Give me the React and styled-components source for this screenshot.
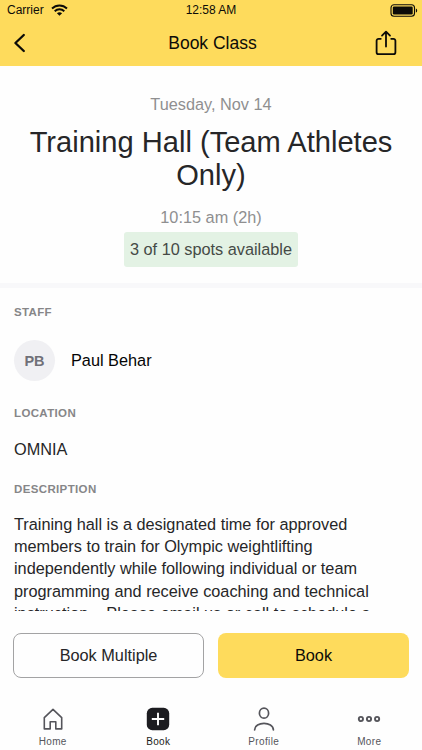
import styled, { createGlobalStyle } from 'styled-components'

const GlobalStyle = createGlobalStyle`
  * {
    box-sizing: border-box;
  }
  body {
    margin: 0;
    background: #fefefe;
    font-family: 'Liberation Sans', Arial, sans-serif;
    font-size: 16.3px;
    color: #262628;
  }
`

const Screen = styled.div`
  display: flex;
  flex-direction: column;
  width: 100%;
  height: 750px;
  overflow: hidden;
`

const TopBar = styled.header`
  flex: none;
  height: 66px;
  background: #fedb5c;
  color: #0c0b08;
`

const StatusBar = styled.div`
  display: grid;
  grid-template-columns: 1fr auto 1fr;
  align-items: center;
  height: 20px;
  padding: 0 4px 0 7px;
  font-size: 12px;
  line-height: 20px;
  & > svg {
    justify-self: end;
  }
`

const Carrier = styled.div`
  display: flex;
  align-items: center;
  gap: 7px;
`

const Clock = styled.div`
  padding-right: 3px;
`

const NavBar = styled.div`
  display: grid;
  grid-template-columns: 60px 1fr 60px;
  align-items: center;
  height: 46px;
`

const IconButton = styled.button`
  display: flex;
  justify-content: ${(props) => (props.$end ? 'flex-end' : 'flex-start')};
  padding: ${(props) => (props.$end ? '0 25.5px 0 0' : '0 0 0 12px')};
  border: 0;
  background: none;
  color: inherit;
`

const NavTitle = styled.h1`
  margin: 0;
  font-size: 17.5px;
  font-weight: 400;
  line-height: 20px;
  text-align: center;
  padding-left: 3px;
`

const Summary = styled.section`
  flex: none;
  display: flex;
  flex-direction: column;
  align-items: center;
  height: 222px;
  padding: 28px 20px 0;
  border-bottom: 5px solid #f8f8fa;
  text-align: center;
`

const Muted = styled.div`
  line-height: 20px;
  color: #8f8f90;
`

const ClassName = styled.h2`
  margin: 12px 0 16px;
  font-size: 29.1px;
  font-weight: 400;
  line-height: 32.5px;
`

const Spots = styled.div`
  height: 35px;
  margin-top: 5px;
  padding: 0 6px;
  border-radius: 3px;
  background: #e3f2e4;
  color: #454a46;
  line-height: 35px;
`

const Details = styled.main`
  flex: none;
  height: 323px;
  padding: 17px 14px 0;
  overflow: hidden;
`

const Label = styled.h3`
  margin: 0;
  font-size: 11.5px;
  font-weight: 700;
  line-height: 14px;
  letter-spacing: 0.36px;
  color: #868688;
`

const StaffRow = styled.div`
  display: flex;
  align-items: center;
  gap: 16px;
  margin: 21px 0 25px;
  color: #040404;
`

const Avatar = styled.div`
  width: 41px;
  height: 41px;
  border-radius: 50%;
  background: #f0f0f3;
  color: #707078;
  font-size: 14.5px;
  font-weight: 700;
  line-height: 42px;
  text-align: center;
`

const Location = styled.div`
  margin: 19px 0 23px;
  line-height: 20px;
`

const Description = styled.p`
  margin: 16.6px 0 0;
  line-height: 22.4px;
  white-space: pre-wrap;
`

const Actions = styled.div`
  flex: none;
  display: grid;
  grid-template-columns: 1fr 1fr;
  gap: 14px;
  padding: 22px 13px 0;
`

const ActionButton = styled.button`
  height: 45px;
  border: ${(props) => (props.$primary ? '0' : '1px solid #a3a3a4')};
  border-radius: 8px;
  background: ${(props) => (props.$primary ? '#fedb5c' : '#fefefe')};
  color: ${(props) => (props.$primary ? '#0c0b08' : '#262628')};
  font: inherit;
`

const TabBar = styled.nav`
  display: grid;
  grid-template-columns: repeat(4, 1fr);
  margin-top: 29.4px;
`

const Tab = styled.div`
  display: flex;
  flex-direction: column;
  align-items: center;
  font-size: 10px;
  line-height: 12px;
  letter-spacing: 0.35px;
  color: ${(props) => (props.$active ? '#1c1c20' : '#55555b')};
  & > svg {
    margin-bottom: 5px;
  }
`

const WifiIcon = () => (
  <svg width="17" height="12" viewBox="0 0 17 12" fill="none" stroke="currentColor" strokeWidth="1.9">
    <path d="M1 4.5C5.2.4 11.8.4 16 4.5" />
    <path d="M3.7 7.2c2.7-2.6 6.9-2.6 9.6 0" />
    <path d="M8.5 11.7 5.9 9.2c1.5-1.4 3.7-1.4 5.2 0z" fill="currentColor" stroke="none" />
  </svg>
)

const BatteryIcon = () => (
  <svg width="28" height="13" viewBox="0 0 28 13" fill="none">
    <rect x="1" y="0.7" width="23.5" height="11.6" rx="3" stroke="currentColor" strokeWidth="1.1" />
    <rect x="2.8" y="2.5" width="19.9" height="8" rx="1.2" fill="currentColor" />
    <path d="M25.9 4.4c1.7.6 1.7 3.6 0 4.2z" fill="currentColor" />
  </svg>
)

const BackIcon = () => (
  <svg width="14" height="20" viewBox="0 0 14 20" fill="none" stroke="currentColor" strokeWidth="2.3" strokeLinecap="round" strokeLinejoin="round">
    <path d="M11.8 2 3.4 10l8.4 8" />
  </svg>
)

const ShareIcon = () => (
  <svg width="22" height="26" viewBox="0 0 22 26" fill="none" stroke="currentColor" strokeWidth="1.8" strokeLinecap="round" strokeLinejoin="round">
    <path d="M5.8 8.8H3.6a2 2 0 0 0-2 2v11.4a2 2 0 0 0 2 2h14.8a2 2 0 0 0 2-2V10.8a2 2 0 0 0-2-2h-2.2" />
    <path d="M11 16.5V2M7 5.6l4-4 4 4" />
  </svg>
)

const HomeIcon = () => (
  <svg width="24" height="24" viewBox="0 0 24 24" fill="none" stroke="currentColor" strokeWidth="1.6" strokeLinejoin="round">
    <path d="M3.3 10.6 12 2.3l8.7 8.3v11.3h-5.9v-7.2H9.2v7.2H3.3z" />
  </svg>
)

const BookIcon = () => (
  <svg width="24" height="24" viewBox="0 0 24 24">
    <rect x="0.8" y="0.8" width="22.4" height="22.4" rx="5.5" fill="currentColor" />
    <path d="M12 5.8v12.4M5.8 12h12.4" stroke="#fff" strokeWidth="1.9" />
  </svg>
)

const ProfileIcon = () => (
  <svg width="24" height="24" viewBox="0 0 24 24" fill="none" stroke="currentColor" strokeWidth="1.7" strokeLinecap="round">
    <ellipse cx="12" cy="6.2" rx="4.6" ry="5" />
    <path d="M2.6 23c.2-8.8 18.6-8.8 18.8 0" />
  </svg>
)

const MoreIcon = () => (
  <svg width="24" height="24" viewBox="0 0 24 24" fill="none" stroke="currentColor" strokeWidth="1.9">
    <circle cx="3.9" cy="12" r="2.1" />
    <circle cx="12" cy="12" r="2.1" />
    <circle cx="20.1" cy="12" r="2.1" />
  </svg>
)

export default function App() {
  return (
    <Screen>
      <GlobalStyle />
      <TopBar>
        <StatusBar>
          <Carrier>
            Carrier
            <WifiIcon />
          </Carrier>
          <Clock>12:58 AM</Clock>
          <BatteryIcon />
        </StatusBar>
        <NavBar>
          <IconButton aria-label="Back">
            <BackIcon />
          </IconButton>
          <NavTitle>Book Class</NavTitle>
          <IconButton $end aria-label="Share">
            <ShareIcon />
          </IconButton>
        </NavBar>
      </TopBar>
      <Summary>
        <Muted>Tuesday, Nov 14</Muted>
        <ClassName>Training Hall (Team Athletes Only)</ClassName>
        <Muted>10:15 am (2h)</Muted>
        <Spots>3 of 10 spots available</Spots>
      </Summary>
      <Details>
        <Label>STAFF</Label>
        <StaffRow>
          <Avatar>PB</Avatar>
          Paul Behar
        </StaffRow>
        <Label>LOCATION</Label>
        <Location>OMNIA</Location>
        <Label>DESCRIPTION</Label>
        <Description>
          Training hall is a designated time for approved members to train for Olympic weightlifting
          {' '}independently while following individual or team programming and receive coaching and technical
          {' '}instruction. {'  '}Please email us or call to schedule a
        </Description>
      </Details>
      <Actions>
        <ActionButton>Book Multiple</ActionButton>
        <ActionButton $primary>Book</ActionButton>
      </Actions>
      <TabBar>
        <Tab>
          <HomeIcon />
          Home
        </Tab>
        <Tab $active>
          <BookIcon />
          Book
        </Tab>
        <Tab>
          <ProfileIcon />
          Profile
        </Tab>
        <Tab>
          <MoreIcon />
          More
        </Tab>
      </TabBar>
    </Screen>
  )
}
